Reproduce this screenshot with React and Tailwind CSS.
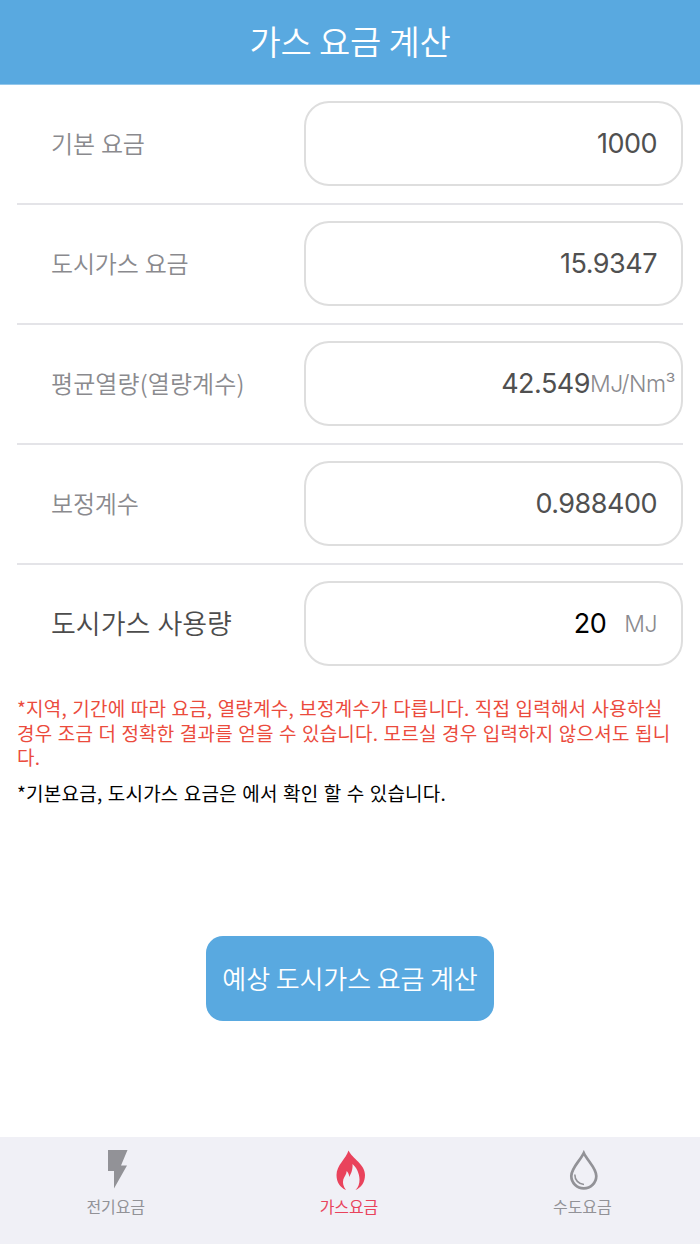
import React from 'react';

// ═══════════════════════════════════════════════════════════════
// Icons
// ═══════════════════════════════════════════════════════════════

const BoltIcon = () => (
    <svg className="w-10 h-10" viewBox="0 0 40 40" fill="currentColor">
        <path d="M11 0H30.500L24 15.500H30L17 38.500V21H11Z" />
    </svg>
);

const FlameIcon = () => (
    <svg className="w-10 h-10" viewBox="0 0 40 40" fill="currentColor">
        <path d="M18.500 0.500C16 9 6.500 15 6.500 25C6.500 32 10 37.500 16 40C13.500 36.500 12.300 33 13.300 29.500C14.200 26.500 16.500 24.500 16.700 21C18.500 23 19.200 25 19.200 27C21 23.500 23 20 22.500 14C26.500 17.500 29.500 23.500 29.500 29.500C29.500 33.500 28.500 37 25.500 40C31.500 37.500 35 32 35 25C35 14 22.500 9 18.500 0.500Z" />
    </svg>
);

const DropIcon = () => (
    <svg className="w-10 h-10" viewBox="0 0 40 40" fill="none" stroke="currentColor">
        <path strokeWidth={2.700} strokeLinejoin="miter" d="M20.800 3C17 11 8.300 18 8.300 26A12.500 12.300 0 0 0 33.300 26C33.300 18 24.500 11 20.800 3Z" />
        <path strokeWidth={1.600} d="M11.800 24.500C11.800 30 15.500 34 21 34.500" />
    </svg>
);

// ═══════════════════════════════════════════════════════════════
// Form row
// ═══════════════════════════════════════════════════════════════

const Row = ({ label, labelClass = 'text-2xl tracking-[-0.2px] [word-spacing:1px] text-[#8a8a8e]', last, children }) => (
    <div className={`mx-[17px] flex h-[120px] items-center justify-between border-b-2 pb-[2px] pl-[34px] ${last ? 'border-transparent' : 'border-[#e4e4e8]'}`}>
        <span className={`whitespace-nowrap font-[350] ${labelClass}`}>{label}</span>
        <div className="flex h-[85px] w-[379px] items-center justify-end rounded-[25px] border-2 border-[#dedede] pt-[3px] font-['Inter','Noto_Sans_CJK_KR',sans-serif] text-[27px] tracking-[-0.5px] text-[#505050]">
            {children}
        </div>
    </div>
);

// ═══════════════════════════════════════════════════════════════
// Tab bar
// ═══════════════════════════════════════════════════════════════

const Tab = ({ icon, label, active }) => (
    <button className={`flex flex-1 flex-col items-center pt-[13px] ${active ? 'text-[#e9435c]' : 'text-[#929297]'}`}>
        {icon}
        <span className="mt-1 pr-[2px] text-base leading-6 tracking-[-0.1px]">{label}</span>
    </button>
);

export default function App() {
    return (
        <div className="flex h-[1244px] w-[700px] flex-col bg-white font-['Noto_Sans_CJK_KR',sans-serif]">
            <header className="flex h-[85px] shrink-0 items-center justify-center border-b border-[#93c7eb] bg-[#59a9e0] pb-1">
                <h1 className="text-[34px] font-[350] tracking-[-0.2px] text-white">가스 요금 계산</h1>
            </header>

            <main className="flex flex-1 flex-col">
                <Row label="기본 요금">
                    <span className="pr-6">1000</span>
                </Row>
                <Row label="도시가스 요금">
                    <span className="pr-6">15.9347</span>
                </Row>
                <Row label="평균열량(열량계수)" labelClass="text-2xl tracking-[0.1px] text-[#8a8a8e]">
                    <span>42.549</span>
                    <span className="pr-[6px] text-[23px] font-[350] text-[#8a8a8e]">MJ/Nm³</span>
                </Row>
                <Row label="보정계수">
                    <span className="pr-6">0.988400</span>
                </Row>
                <Row label="도시가스 사용량" labelClass="text-[27px] [word-spacing:1px] text-[#4c4c4c]" last>
                    <span className="text-black">20</span>
                    <span className="pl-[18px] pr-6 text-[23px] font-[350] text-[#8a8a8e]">MJ</span>
                </Row>

                {/* Notes */}
                <div className="px-[17px] pt-[11px] text-[19px] leading-[24.5px] tracking-[0.23px] [word-spacing:0.8px] whitespace-nowrap">
                    <p className="text-[#eb4b3d]">
                        *지역, 기간에 따라 요금, 열량계수, 보정계수가 다릅니다. 직접 입력해서 사용하실<br />
                        경우 조금 더 정확한 결과를 얻을 수 있습니다. 모르실 경우 입력하지 않으셔도 됩니<br />
                        다.
                    </p>
                    <p className="mt-[11px] text-black">*기본요금, 도시가스 요금은 에서 확인 할 수 있습니다.</p>
                </div>

                <button className="mt-auto mb-[116px] h-[85px] w-[288px] self-center rounded-[17px] bg-[#59a9e0] pb-[3px] text-[26px] font-[350] tracking-[-0.1px] text-white">
                    예상 도시가스 요금 계산
                </button>
            </main>

            <nav className="flex h-[107px] shrink-0 items-start bg-[#f0f0f6]">
                <Tab icon={<BoltIcon />} label="전기요금" />
                <Tab icon={<FlameIcon />} label="가스요금" active />
                <Tab icon={<DropIcon />} label="수도요금" />
            </nav>
        </div>
    );
}
